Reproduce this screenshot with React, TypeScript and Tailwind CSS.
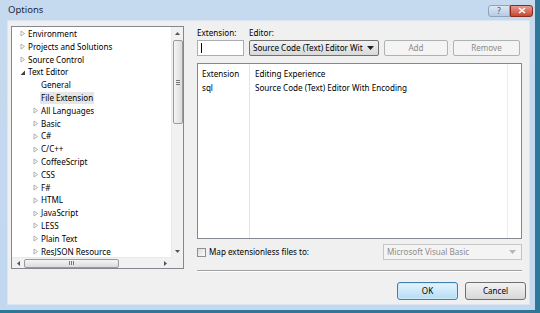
import React from "react";

type Node = { label: string; level: 0 | 1; state: "closed" | "open" | "leaf"; selected?: boolean };

const TREE: Node[] = [
  { label: "Environment", level: 0, state: "closed" },
  { label: "Projects and Solutions", level: 0, state: "closed" },
  { label: "Source Control", level: 0, state: "closed" },
  { label: "Text Editor", level: 0, state: "open" },
  { label: "General", level: 1, state: "leaf" },
  { label: "File Extension", level: 1, state: "leaf", selected: true },
  { label: "All Languages", level: 1, state: "closed" },
  { label: "Basic", level: 1, state: "closed" },
  { label: "C#", level: 1, state: "closed" },
  { label: "C/C++", level: 1, state: "closed" },
  { label: "CoffeeScript", level: 1, state: "closed" },
  { label: "CSS", level: 1, state: "closed" },
  { label: "F#", level: 1, state: "closed" },
  { label: "HTML", level: 1, state: "closed" },
  { label: "JavaScript", level: 1, state: "closed" },
  { label: "LESS", level: 1, state: "closed" },
  { label: "Plain Text", level: 1, state: "closed" },
  { label: "ResJSON Resource", level: 1, state: "closed" },
];

function Expander({ state }: { state: Node["state"] }) {
  if (state === "leaf") return <span className="w-[7px]" />;
  if (state === "open")
    return (
      <svg width="7" height="7" viewBox="0 0 7 7" className="shrink-0">
        <path d="M6 1.5 L6 6 L1.5 6 Z" fill="#404040" />
      </svg>
    );
  return (
    <svg width="7" height="7" viewBox="0 0 7 7" className="shrink-0">
      <path d="M2 1 L5.5 3.5 L2 6 Z" fill="none" stroke="#a6a6a6" strokeWidth="0.9" />
    </svg>
  );
}

function Caret({ color = "#222" }: { color?: string }) {
  return (
    <svg width="7" height="4" viewBox="0 0 7 4" className="shrink-0">
      <path d="M0 0 H7 L3.5 4 Z" fill={color} />
    </svg>
  );
}

function TreePanel() {
  return (
    <div className="ml-[3px] mt-[5px] w-[173px] h-[243px] border border-[#828790] bg-white flex flex-col">
      <div className="flex flex-1 min-h-0">
        <div className="flex-1 overflow-hidden pt-[0.6px]">
          {TREE.map((n) => (
            <div key={n.label} className={`h-[12.8px] flex items-center ${n.level === 0 ? "pl-[7px]" : "pl-[20px]"}`}>
              <Expander state={n.state} />
              <span
                className={`ml-[1px] px-[1px] leading-[12px] whitespace-nowrap ${n.selected ? "bg-[#e6e6e6]" : ""}`}
              >
                {n.label}
              </span>
            </div>
          ))}
        </div>
        {/* vertical scrollbar */}
        <div className="w-[12px] bg-[#f1f1f1] border-l border-[#e9e9e9] flex flex-col items-center">
          <div className="h-[12px] flex items-center justify-center">
            <svg width="5" height="3" viewBox="0 0 5 3"><path d="M0 3 H5 L2.5 0 Z" fill="#555" /></svg>
          </div>
          <div className="mt-[1px] w-[10px] h-[84px] rounded-[2px] border border-[#9a9a9a] bg-gradient-to-r from-[#f4f4f4] to-[#dcdcdc] flex items-center justify-center">
            <div className="flex flex-col gap-[1px]">
              <div className="w-[4px] h-[1px] bg-[#777]" />
              <div className="w-[4px] h-[1px] bg-[#777]" />
              <div className="w-[4px] h-[1px] bg-[#777]" />
            </div>
          </div>
          <div className="flex-1" />
          <div className="h-[12px] flex items-center justify-center">
            <svg width="5" height="3" viewBox="0 0 5 3"><path d="M0 0 H5 L2.5 3 Z" fill="#555" /></svg>
          </div>
        </div>
      </div>
      {/* horizontal scrollbar */}
      <div className="h-[11px] flex">
        <div className="flex-1 bg-[#f1f1f1] border-t border-[#e9e9e9] flex items-center">
          <div className="w-[12px] flex items-center justify-center">
            <svg width="3" height="5" viewBox="0 0 3 5"><path d="M3 0 V5 L0 2.5 Z" fill="#555" /></svg>
          </div>
          <div className="w-[95px] h-[9px] rounded-[2px] border border-[#9a9a9a] bg-gradient-to-b from-[#f4f4f4] to-[#dcdcdc] flex items-center justify-center gap-[1px]">
            <div className="w-[1px] h-[4px] bg-[#777]" />
            <div className="w-[1px] h-[4px] bg-[#777]" />
            <div className="w-[1px] h-[4px] bg-[#777]" />
          </div>
          <div className="flex-1" />
          <div className="w-[12px] flex items-center justify-center">
            <svg width="3" height="5" viewBox="0 0 3 5"><path d="M0 0 V5 L3 2.5 Z" fill="#555" /></svg>
          </div>
        </div>
        <div className="w-[12px] bg-[#f0f0f0]" />
      </div>
    </div>
  );
}

function RightPane() {
  return (
    <div className="ml-[13px] w-[329px] flex flex-col">
      <div className="mt-[6px] flex h-[12px] items-center">
        <span className="w-[52px]">Extension:</span>
        <span>Editor:</span>
      </div>
      <div className="mt-[1px] flex h-[16px]">
        <div className="w-[47px] border border-[#abadb3] bg-white flex items-center pl-[3px]">
          <div className="w-[1px] h-[10px] bg-black" />
        </div>
        <div className="ml-[5px] w-[130px] rounded-[2px] border border-[#707070] bg-gradient-to-b from-[#f2f2f2] to-[#d9d9d9] flex items-center pl-[3px] pr-[4px]">
          <span className="flex-1 whitespace-nowrap overflow-hidden">Source Code (Text) Editor Wit</span>
          <Caret />
        </div>
        <div className="ml-[5px] w-[64px] rounded-[2px] border border-[#adb2b5] bg-[#f4f4f4] flex items-center justify-center text-[#8c8c8c]">
          Add
        </div>
        <div className="ml-[5px] w-[67px] rounded-[2px] border border-[#adb2b5] bg-[#f4f4f4] flex items-center justify-center text-[#8c8c8c]">
          Remove
        </div>
      </div>
      <div className="mt-[7px] w-[325px] h-[176px] border border-[#828790] bg-white flex">
        <div className="w-[52px] border-r border-[#e5e5e5] flex flex-col">
          <div className="h-[17px] flex items-center pl-[4px] pt-[3px]">Extension</div>
          <div className="h-[15px] flex items-center pl-[4px]">sql</div>
        </div>
        <div className="flex-1 border-r border-[#ececec] flex flex-col">
          <div className="h-[17px] flex items-center pl-[5px] pt-[3px]">Editing Experience</div>
          <div className="h-[15px] flex items-center pl-[5px]">Source Code (Text) Editor With Encoding</div>
        </div>
        <div className="w-[13px]" />
      </div>
      <div className="mt-[5px] flex h-[16px] items-center">
        <div className="w-[9px] h-[9px] border border-[#8f8f8f] bg-gradient-to-br from-[#dcdcdc] to-[#fbfbfb]" />
        <span className="ml-[3px] flex-1">Map extensionless files to:</span>
        <div className="mr-[4px] w-[139px] h-[16px] border border-[#c5c5c5] bg-[#f4f4f4] flex items-center pl-[3px] pr-[5px] text-[#8d8d8d]">
          <span className="flex-1">Microsoft Visual Basic</span>
          <Caret color="#b5b5b5" />
        </div>
      </div>
      <div className="mt-[10px] w-[325px] h-[1px] bg-[#a0a0a0] border-b border-white box-content" />
      <div className="mt-[10px] flex justify-end gap-[7px]">
        <div className="w-[61px] h-[18px] rounded-[3px] border border-[#3c7fb1] bg-gradient-to-b from-[#e5f4fc] to-[#b5ddf4] flex items-center justify-center shadow-[inset_0_0_0_1px_#cbe9f9]">
          OK
        </div>
        <div className="w-[61px] h-[18px] rounded-[3px] border border-[#707070] bg-gradient-to-b from-[#f2f2f2] to-[#d8d8d8] flex items-center justify-center">
          Cancel
        </div>
      </div>
    </div>
  );
}

export default function App() {
  return (
    <div
      className="w-[540px] h-[313px] bg-[#2e7799] overflow-hidden text-[8.1px] text-black"
      style={{ fontFamily: '"Noto Sans", "Open Sans", sans-serif' }}
    >
      <div className="w-[536px] h-[310px] bg-gradient-to-b from-[#c5d9ef] to-[#c2d8ee] border-r border-[#4d6c8a] flex flex-col">
        {/* title bar */}
        <div className="h-[20px] flex items-center pl-[8px] pr-[2px]">
          <span className="flex-1 text-[9.5px] text-[#1b2a3a]">Options</span>
          <div className="mt-[1px] w-[22px] h-[12px] rounded-l-[3px] border border-[#8ea3bc] bg-gradient-to-b from-[#dde7f3] to-[#b8cbe2] flex items-center justify-center text-[8px] text-[#3b4e66] leading-none">
            ?
          </div>
          <div className="mt-[1px] w-[23px] h-[12px] rounded-r-[3px] border border-[#8a2b20] bg-gradient-to-b from-[#e89a8f] to-[#c7462f] flex items-center justify-center">
            <svg width="8" height="7" viewBox="0 0 8 7">
              <path d="M1 1 L7 6 M7 1 L1 6" stroke="#fff" strokeWidth="1.6" />
            </svg>
          </div>
        </div>
        {/* client area */}
        <div className="flex-1 ml-[7px] mr-[5px] mb-[5px] bg-[#f0f0f0] border border-[#dbe6f2] flex">
          <TreePanel />
          <RightPane />
        </div>
      </div>
    </div>
  );
}
